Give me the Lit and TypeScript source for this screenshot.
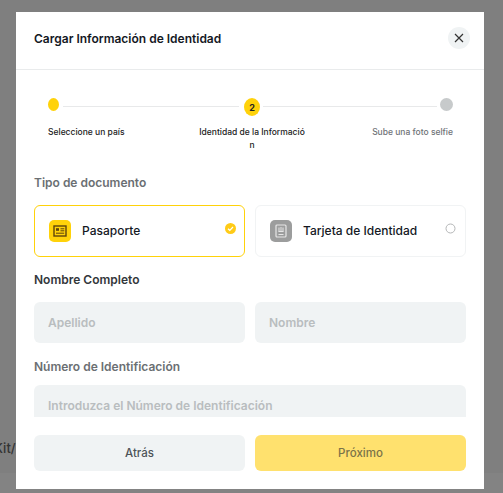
import { LitElement, html, css } from "lit";
import { customElement } from "lit/decorators.js";

@customElement("app-root")
export class AppRoot extends LitElement {
  static styles = css`
    :host { display: block; width: 503px; height: 493px; }
    * { box-sizing: border-box; }
    .page { position: relative; width: 503px; height: 493px; overflow: hidden; background: #7f7f7f;
      font-family: "Inter", "Liberation Sans", sans-serif; display: flex; justify-content: flex-start; align-items: flex-start; padding: 12px 0 0 16px; }
    .behind { position: absolute; left: -6px; top: 440px; font-size: 13px; font-weight: 500; color: #333; }
    .band { position: absolute; left: 0; right: 0; top: 473px; bottom: 0; background: #838383; }
    .modal { position: relative; width: 468px; height: 477px; background: #fff; display: flex; flex-direction: column; }
    .head { height: 58px; flex: none; display: flex; align-items: center; justify-content: space-between; padding: 0 14px 5px 18px; border-bottom: 1px solid #e9ebec; }
    .title { font-size: 12px; font-weight: 600; color: #14181f; }
    .close { width: 22px; height: 22px; border-radius: 50%; background: #f0f3f4; display: flex; align-items: center; justify-content: center; }
    .body { flex: 1; padding: 0 18px; overflow: hidden; min-height: 0; }
    .steps { display: grid; grid-template-columns: 1fr 1fr 1fr; padding: 28px 0 0; height: 105px; position: relative; }
    .step { display: flex; flex-direction: column; font-size: 8.5px; font-weight: 500; color: #222; line-height: 13px; }
    .step.s1 { align-items: flex-start; padding-left: 14px; }
    .step.s2 { align-items: center; text-align: center; padding-left: 4px; }
    .step.s3 { align-items: flex-end; color: #6f7377; padding-right: 13px; }
    .dotrow { height: 18px; display: flex; align-items: flex-start; margin-bottom: 10px; }
    .dot { border-radius: 50%; background: #ffd20a; display: flex; align-items: center; justify-content: center; font-size: 9px; font-weight: 700; color: #222; }
    .d1 { width: 11px; height: 13px; }
    .d2 { width: 16px; height: 18px; }
    .d3 { width: 13px; height: 13px; background: #c7cacb; }
    .lbl2 { width: 110px; word-break: break-all; }
    .line { position: absolute; top: 36px; height: 1px; background: #e8e9ea; }
    .l1 { left: 29px; width: 176px; }
    .l2 { left: 229px; width: 174px; }
    .section { font-size: 12px; font-weight: 600; color: #6b6f73; line-height: 16px; }
    .section.dark { color: #33373b; margin-top: 15px; }
    .section.num { margin-top: 16px; }
    .cards { display: grid; grid-template-columns: 1fr 1fr; gap: 10px; margin-top: 14px; }
    .card { position: relative; height: 52px; border: 1px solid #f1f3f4; border-radius: 6px; display: flex; align-items: center; padding: 0 14px; gap: 11px; font-size: 12px; font-weight: 500; color: #14181f; }
    .card.on { border-color: #ffd20a; }
    .name { margin-bottom: 2px; }
    .ico { width: 22px; height: 22px; border-radius: 5px; background: #ffd20a; display: flex; align-items: center; justify-content: center; }
    .ico.g { background: #9c9d9d; }
    .mark { position: absolute; right: 9px; top: 17px; width: 11px; height: 11px; }
    .card.on .mark { right: 8px; top: 17px; }
    .fields { display: grid; grid-template-columns: 1fr 1fr; gap: 10px; margin-top: 14px; }
    .input { height: 41px; border-radius: 6px; background: #f0f3f4; padding: 0 14px; display: flex; align-items: center; font-size: 12px; font-weight: 600; color: #b9bdbf; }
    .input.id { margin-top: 10px; white-space: nowrap; }
    .foot { flex: none; display: grid; grid-template-columns: 1fr 1fr; gap: 10px; padding: 18px; }
    .btn { height: 36px; border-radius: 6px; display: flex; align-items: center; justify-content: center; font-size: 11.5px; font-weight: 500; color: #4d5358; background: #f0f3f4; }
    .btn.y { background: #ffe16e; color: #7b7349; }
  `;

  render() {
    return html`
      <div class="page">
        <div class="band"></div>
        <div class="behind">Kit/</div>
        <div class="modal">
          <div class="head">
            <div class="title">Cargar Información de Identidad</div>
            <div class="close">
              <svg width="10" height="10" viewBox="0 0 10 10"><path d="M1 1l8 8M9 1l-8 8" stroke="#333" stroke-width="1.2" fill="none"/></svg>
            </div>
          </div>
          <div class="body">
            <div class="steps">
              <div class="line l1"></div>
              <div class="line l2"></div>
              <div class="step s1"><div class="dotrow"><div class="dot d1"></div></div><div>Seleccione un país</div></div>
              <div class="step s2"><div class="dotrow"><div class="dot d2">2</div></div><div class="lbl2">Identidad de la Información</div></div>
              <div class="step s3"><div class="dotrow"><div class="dot d3"></div></div><div>Sube una foto selfie</div></div>
            </div>
            <div class="section">Tipo de documento</div>
            <div class="cards">
              <div class="card on">
                <div class="ico">
                  <svg width="14" height="12" viewBox="0 0 14 12"><rect x="1" y="1" width="12" height="10" fill="none" stroke="#5d430c" stroke-width="1.4"/><rect x="3" y="3.2" width="3" height="2.6" fill="#5d430c"/><path d="M7.5 3.8h3.8M7.5 5.8h3.8M3 8.2h8.2" stroke="#5d430c" stroke-width="1"/></svg>
                </div>
                <span class="name">Pasaporte</span>
                <svg class="mark" viewBox="0 0 11 11"><circle cx="5.5" cy="5.5" r="5.5" fill="#ffcb17"/><path d="M3 5.7l1.8 1.6L8 4" stroke="#fff" stroke-width="1.2" fill="none"/></svg>
              </div>
              <div class="card">
                <div class="ico g">
                  <svg width="12" height="14" viewBox="0 0 12 14"><rect x="1" y="1" width="10" height="12" rx="1" fill="none" stroke="#e6e6e6" stroke-width="1.2"/><path d="M4 3.5v4M6 3v4.5M8 3.5v4M3.5 7.5h5M3.5 10.5h5" stroke="#e6e6e6" stroke-width="1"/></svg>
                </div>
                <span class="name">Tarjeta de Identidad</span>
                <svg class="mark" viewBox="0 0 11 11"><circle cx="5.5" cy="5.5" r="4.5" fill="#fff" stroke="#b4b6b7" stroke-width="1"/></svg>
              </div>
            </div>
            <div class="section dark">Nombre Completo</div>
            <div class="fields">
              <div class="input">Apellido</div>
              <div class="input">Nombre</div>
            </div>
            <div class="section num">Número de Identificación</div>
            <div class="input id">Introduzca el Número de Identificación</div>
          </div>
          <div class="foot">
            <div class="btn">Atrás</div>
            <div class="btn y">Próximo</div>
          </div>
        </div>
      </div>
    `;
  }
}
